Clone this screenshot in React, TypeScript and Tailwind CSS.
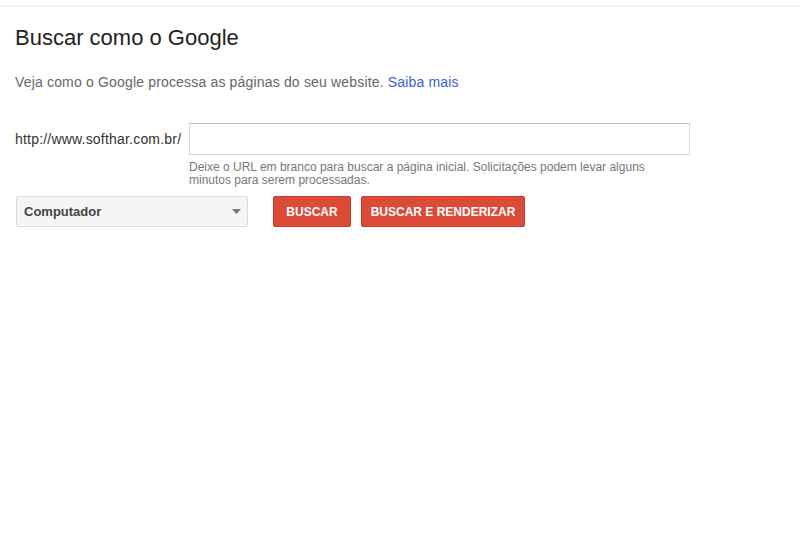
export default function App() {
    return (
        <div className="min-h-screen bg-white font-['Liberation_Sans',Arial,sans-serif]">
            {/* Top divider */}
            <div className="mt-[5px] h-[2px] bg-[#f1f1f1]" />

            <div className="px-[15px] pt-[18px]">
                <h1 className="text-[22px] leading-[26px] font-normal text-[#222]">
                    Buscar como o Google
                </h1>

                <p className="mt-[21px] text-[14px] leading-[20px] tracking-[0.17px] text-[#666]">
                    Veja como o Google processa as páginas do seu website.{" "}
                    <a href="#" className="text-[#3b5fd6]">
                        Saiba mais
                    </a>
                </p>

                {/* URL row */}
                <div className="mt-[31px] flex items-center">
                    <span className="w-[174px] text-[14px] leading-[20px] tracking-[0.2px] text-[#333]">
                        http://www.softhar.com.br/
                    </span>
                    <input
                        type="text"
                        className="h-[32px] w-[501px] border border-[#d9d9d9] border-t-[#c0c0c0] bg-white px-2 text-[13px] outline-none"
                    />
                </div>
                <p className="ml-[174px] mt-[6px] w-[470px] text-[12px] leading-[13px] text-[#777]">
                    Deixe o URL em branco para buscar a página inicial. Solicitações podem levar alguns
                    minutos para serem processadas.
                </p>

                {/* Actions */}
                <div className="mt-[9px] flex items-center">
                    <div className="ml-px flex h-[31px] w-[232px] items-center justify-between rounded-[2px] border border-[#dcdcdc] bg-[#f5f5f5] pl-[7px] pr-[6px]">
                        <span className="text-[13px] font-bold text-[#444]">Computador</span>
                        <svg width="9" height="5" viewBox="0 0 9 5">
                            <path d="M0 0h9L4.5 5z" fill="#777" />
                        </svg>
                    </div>
                    <button className="ml-[25px] h-[31px] w-[78px] rounded-[2px] border border-[#c83b2a] bg-[#dc4a38] text-[12px] font-bold text-white">
                        BUSCAR
                    </button>
                    <button className="ml-[10px] h-[31px] w-[164px] rounded-[2px] border border-[#c83b2a] bg-[#dc4a38] text-[12px] font-bold text-white">
                        BUSCAR E RENDERIZAR
                    </button>
                </div>
            </div>
        </div>
    );
}
